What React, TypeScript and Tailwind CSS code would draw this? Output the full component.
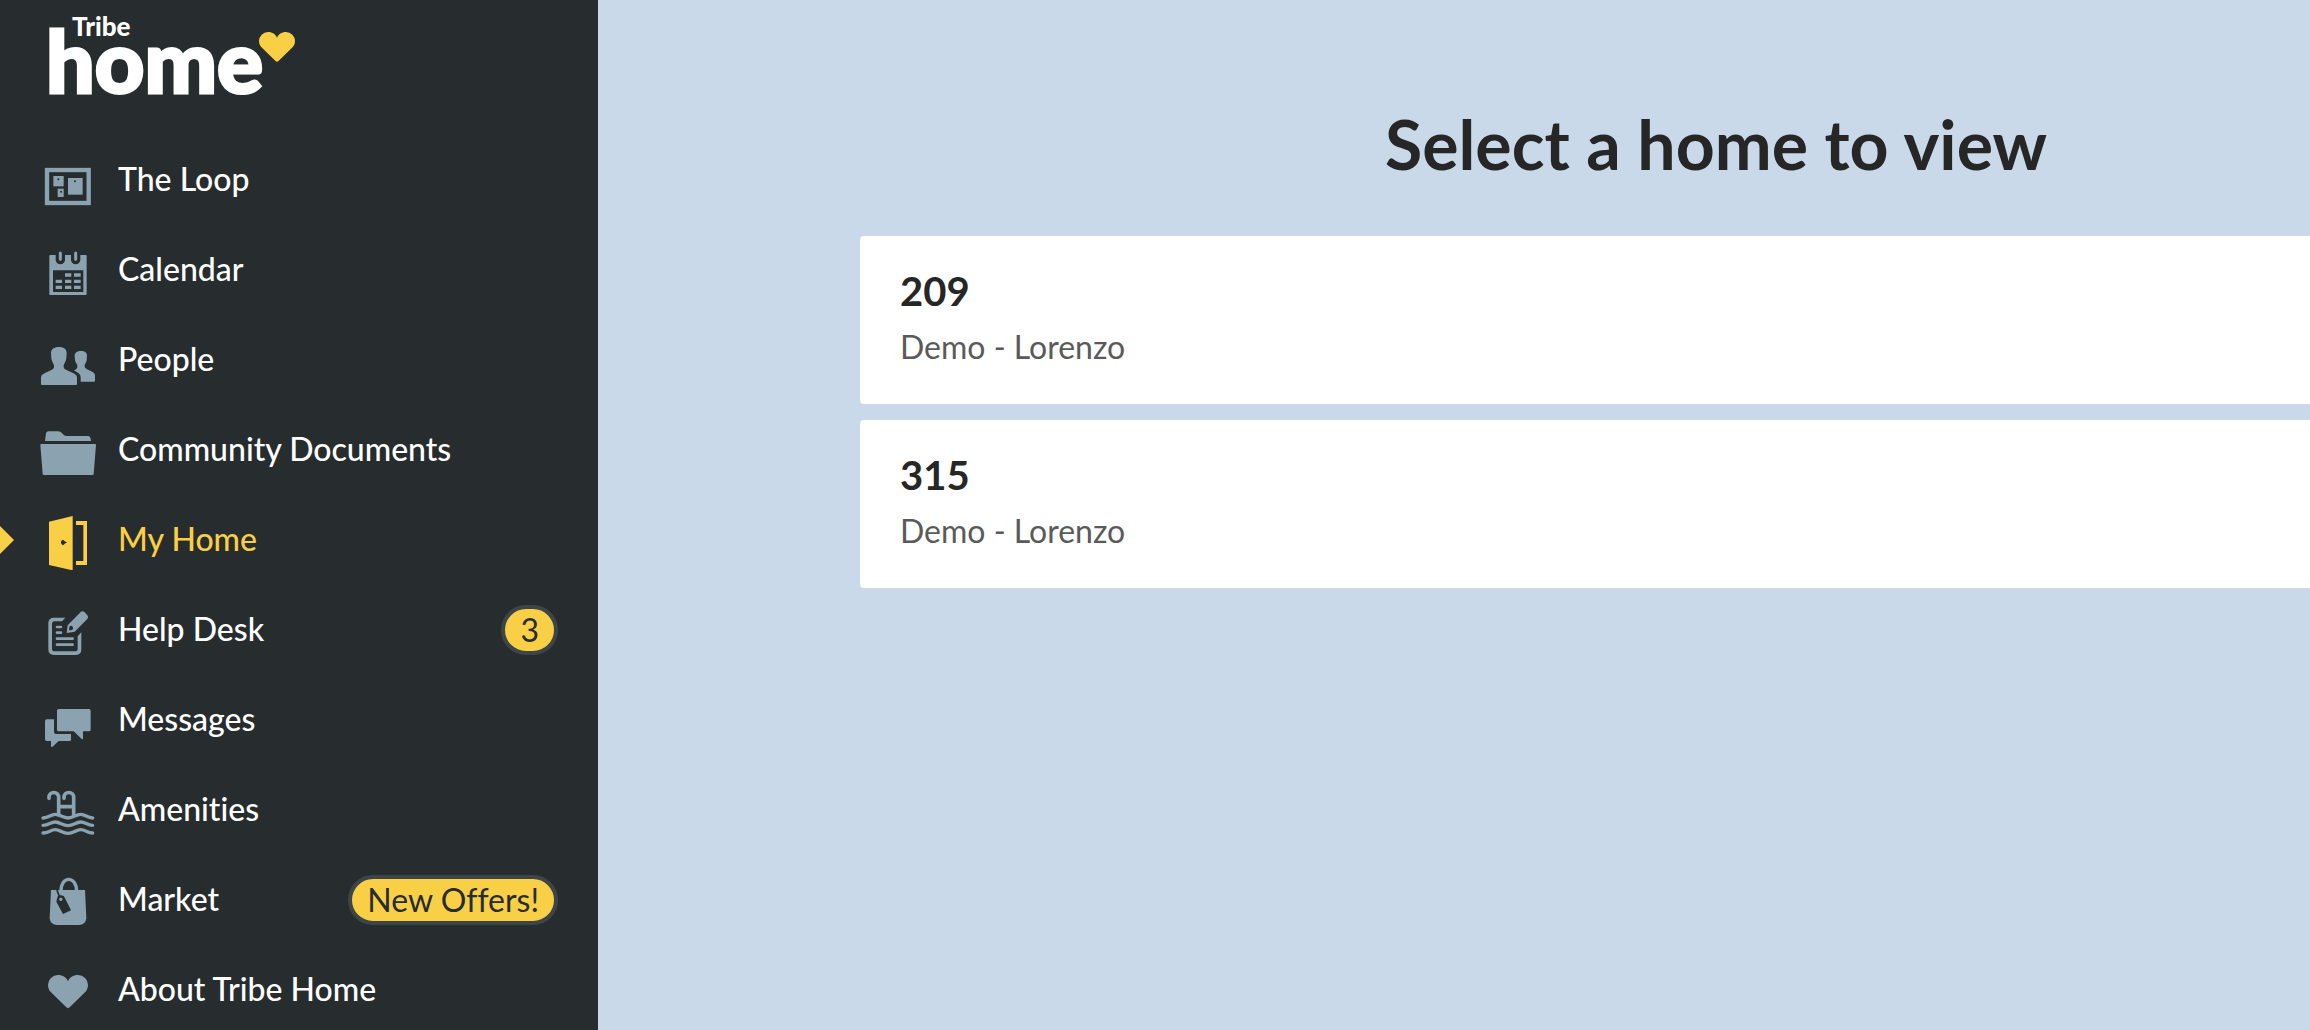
import type { ReactNode } from 'react'
import clsx from 'clsx'

type NavItem = {
    label: string
    icon: ReactNode
    active?: boolean
    badge?: string
}

const HEART = 'M30 75 A30 30 0 0 1 60 45 C75 45 86 53 90 64 C94 53 105 45 120 45 A30 30 0 0 1 150 75 C150 84 146 92 141 97 L95 142 Q90 147 85 142 L39 97 C34 92 30 84 30 75 Z'

function Icon({ children }: { children: ReactNode }) {
    return (
        <svg viewBox="0 0 180 180" className="size-[60px] shrink-0" fill="currentColor" aria-hidden="true">
            {children}
        </svg>
    )
}

const LoopIcon = (
    <Icon>
        <rect x="27" y="60" width="125" height="99" fill="none" stroke="currentColor" strokeWidth="13" />
        <rect x="46" y="78" width="31" height="31" />
        <rect x="59" y="116" width="18" height="25" />
        <rect x="90" y="84" width="44" height="50" />
        <g className="fill-[#272c2e]">
            <circle cx="61" cy="88" r="3" />
            <circle cx="69" cy="125" r="3" />
            <circle cx="111" cy="94" r="3" />
        </g>
    </Icon>
)

const CalendarIcon = (
    <Icon>
        <path
            fillRule="evenodd"
            d="M37 45 H53 V59 A14 14 0 0 0 81 59 V45 H99 V59 A14 14 0 0 0 127 59 V45 H143 Q146 45 146 48 V162 Q146 165 143 165 H37 Q34 165 34 162 V48 Q34 45 37 45 Z M45 91 V156 H136 V91 Z"
        />
        <path d="M67 39 V58 M113 39 V58" stroke="currentColor" strokeWidth="9" strokeLinecap="round" />
        <path d="M81 100 h19 v10 h-19z M108 100 h20 v10 h-20z M53 119 h19 v10 h-19z M81 119 h19 v10 h-19z M108 119 h20 v10 h-20z M53 137 h19 v10 h-19z M81 137 h19 v10 h-19z M108 137 h20 v10 h-20z" />
    </Icon>
)

const PeopleIcon = (
    <Icon>
        <path d="M63 51 C78 51 86 58 86 69 L85 84 C84 94 80 98 77 105 V112 C79 121 95 123 109 131 Q117 135 117 142 V162 Q117 165 114 165 H12 Q9 165 9 162 V142 Q9 135 17 131 C31 123 46 121 48 112 V105 C45 98 41 94 40 84 L39 69 C39 58 48 51 63 51 Z" />
        <path d="M129 63 C141 63 147 69 147 77 L146 90 C145 97 142 100 140 105 V110 C142 117 152 119 164 126 Q171 130 171 136 V152 Q171 155 168 155 H128 V142 Q128 134 122 130 L108 121 C114 119 117 116 118 111 V105 C115 100 112 97 111 90 L110 77 C110 69 117 63 129 63 Z" />
    </Icon>
)

const FolderIcon = (
    <Icon>
        <path d="M21 63 L24 40 Q25 34 32 34 H61 C72 34 74 48 86 48 H150 Q158 48 159 63 Z" />
        <path d="M9 72 H172 Q174 72 174 75 L167 162 Q167 165 164 165 H18 Q14 165 14 162 L7 75 Q7 72 9 72 Z" />
    </Icon>
)

const DoorIcon = (
    <Icon>
        <path fillRule="evenodd" d="M33 35 L104 18 V181 L33 165 Z M75 89 C70 91 69 94 69 97 C69 101 71 104 76 106 L80 101 L87 97 L80 94 Z" />
        <path d="M114 33 H147 V165 H114 V153 H136 V45 H114 Z" />
    </Icon>
)

const HelpDeskIcon = (
    <Icon>
        <path d="M82 53 L72 64 H50 Q42 64 42 72 V146 Q42 154 50 154 H111 Q119 154 119 146 V109 L130 97 V148 Q130 165 113 165 H48 Q31 165 31 148 V70 Q31 53 48 53 Z" />
        <path d="M57 81 H69 M57 98 H69 M57 116 H104 M57 134 H104" stroke="currentColor" strokeWidth="8" strokeLinecap="round" />
        <path
            fillRule="evenodd"
            d="M86 99 L89 76 L126 38 Q132 31 139 36 L147 44 Q153 51 147 58 L110 95 Z M95 79 L93 89 Q99 93 105 87 Q107 80 99 77 Z"
        />
    </Icon>
)

const MessagesIcon = (
    <Icon>
        <path d="M62 57 H153 Q158 57 158 62 V119 Q158 124 153 124 H135 V146 Q134 149 131 147 L107 124 H62 Q57 124 57 119 V62 Q57 57 62 57 Z" />
        <path d="M26 88 H48 V126 Q48 132 54 132 H99 V149 Q99 153 95 153 H62 L43 171 Q39 172 39 168 V153 H26 Q21 153 21 148 V93 Q21 88 26 88 Z" />
    </Icon>
)

const PoolIcon = (
    <Icon>
        <g fill="none" stroke="currentColor" strokeWidth="11" strokeLinecap="round" strokeLinejoin="round">
            <path d="M33 55 V52 A14 14 0 0 1 62 52 V104 M78 55 V52 A14 14 0 0 1 107 52 V104 M62 80 H107" />
            <path
                strokeWidth="10"
                d="M15 114 C32 114 38 103 52 103 C66 103 74 114 90 114 C106 114 114 103 128 103 C142 103 148 114 164 114 M15 136 C32 136 38 126 52 126 C66 126 74 137 90 137 C106 137 114 126 128 126 C142 126 148 136 164 136 M15 159 C32 159 38 149 52 149 C66 149 74 160 90 160 C106 160 114 149 128 149 C142 149 148 159 164 159"
            />
        </g>
    </Icon>
)

const MarketIcon = (
    <Icon>
        <path d="M39 60 H141 L145 145 Q143 165 123 165 H57 Q37 165 35 145 Z" />
        <path d="M69 64 C69 16 115 16 116 64" className="fill-[#272c2e]" stroke="currentColor" strokeWidth="10" />
        <rect x="62" y="60" width="60" height="10" />
        <path d="M57 60 Q60 72 66 82" fill="none" strokeWidth="5" className="stroke-[#272c2e]" />
        <path
            fillRule="evenodd"
            className="fill-[#272c2e]"
            d="M59 79 Q68 72 78 79 L99 121 L75 132 L55 95 Z M68 83 a5 5 0 1 0 1 0 Z"
        />
    </Icon>
)

const HeartIcon = (
    <Icon>
        <path d={HEART} />
    </Icon>
)

const navItems: NavItem[] = [
    { label: 'The Loop', icon: LoopIcon },
    { label: 'Calendar', icon: CalendarIcon },
    { label: 'People', icon: PeopleIcon },
    { label: 'Community Documents', icon: FolderIcon },
    { label: 'My Home', icon: DoorIcon, active: true },
    { label: 'Help Desk', icon: HelpDeskIcon, badge: '3' },
    { label: 'Messages', icon: MessagesIcon },
    { label: 'Amenities', icon: PoolIcon },
    { label: 'Market', icon: MarketIcon, badge: 'New Offers!' },
    { label: 'About Tribe Home', icon: HeartIcon },
]

const homes = [
    { unit: '209', community: 'Demo - Lorenzo' },
    { unit: '315', community: 'Demo - Lorenzo' },
]

function Logo() {
    return (
        <a href="#" className="relative block h-[135px] pl-[46px] font-black text-white">
            <span className="block pt-[10px] pl-[26px] text-[26px] leading-8">Tribe</span>
            <span className="-mt-5 block text-[86px] leading-[76px] [-webkit-text-stroke:3px_white]">home</span>
            <svg viewBox="30 45 120 100" className="absolute top-8 left-[259px] h-[30px] w-9 fill-[#f9cf46]" aria-hidden="true">
                <path d={HEART} />
            </svg>
        </a>
    )
}

function NavLink({ item }: { item: NavItem }) {
    return (
        <li>
            <a
                href="#"
                className={clsx(
                    'relative flex h-[90px] items-center pr-10 pl-[38px]',
                    item.active ? 'text-[#f9cf46]' : 'text-[#8ba3b0]'
                )}
            >
                {item.active && (
                    <svg viewBox="0 0 14 28" className="absolute top-[31px] left-0 h-7 w-3.5" fill="currentColor" aria-hidden="true">
                        <path d="M0 0 L14 14 L0 28 Z" />
                    </svg>
                )}
                {item.icon}
                <span className={clsx('ml-5 flex-1 pb-0.5 font-medium whitespace-nowrap', !item.active && 'text-white')}>
                    {item.label}
                </span>
                {item.badge && (
                    <span className="rounded-full border-4 border-[#3e4548] bg-[#f9cf46] px-[15px] leading-[42px] text-[#272c2e]">
                        {item.badge}
                    </span>
                )}
            </a>
        </li>
    )
}

export default function App() {
    return (
        <div className="flex h-screen overflow-hidden bg-[#c9d9e9] font-['Lato',sans-serif] text-[32px] leading-10 [font-variant-ligatures:none]">
            {/* Sidebar */}
            <aside className="w-[598px] shrink-0 bg-[#272c2e]">
                <Logo />
                <nav>
                    <ul>
                        {navItems.map((item) => (
                            <NavLink key={item.label} item={item} />
                        ))}
                    </ul>
                </nav>
            </aside>

            {/* Home picker */}
            <main className="flex-1 pt-[104px] pl-[262px]">
                <div className="min-w-[1712px]">
                    <h1 className="text-center text-[68px] leading-20 font-bold text-[#262626]">Select a home to view</h1>
                    <div className="mt-[52px] flex flex-col gap-4">
                        {homes.map((home) => (
                            <a key={home.unit} href="#" className="block h-[168px] rounded bg-white px-10 py-8">
                                <h2 className="text-[40px] leading-[46px] font-bold text-[#262626]">{home.unit}</h2>
                                <p className="mt-[13px] text-[#5a5a5a]">{home.community}</p>
                            </a>
                        ))}
                    </div>
                </div>
            </main>
        </div>
    )
}
